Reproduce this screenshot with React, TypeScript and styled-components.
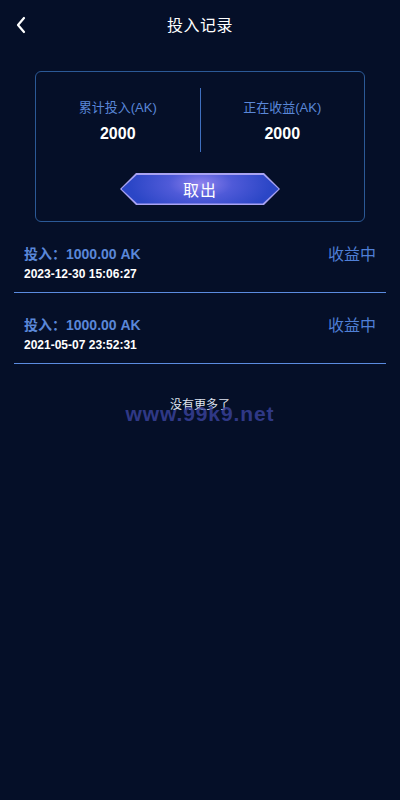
import React from "react";
import styled, { createGlobalStyle } from "styled-components";

const GlobalStyle = createGlobalStyle`
    html, body {
        margin: 0;
        padding: 0;
        background: #050f28;
        font-family: "Liberation Sans", Arial, "Noto Sans CJK SC", sans-serif;
    }
    * { box-sizing: border-box; }
`;

const Page = styled.div`
    width: 400px;
    min-height: 800px;
    background: #050f28;
    color: #fff;
`;

const Header = styled.div`
    height: 50px;
    display: flex;
    align-items: center;
    justify-content: center;
    position: relative;
`;

const Back = styled.div`
    position: absolute;
    left: 13px;
    top: 15px;
    width: 16px;
    height: 20px;
    display: flex;
    align-items: center;
    justify-content: center;
`;

const Title = styled.div`
    font-size: 16px;
    color: #fff;
    letter-spacing: 0.5px;
    margin-top: -2px;
`;

const Card = styled.div`
    margin: 21px 35px 0;
    height: 151px;
    border: 1px solid #2b5996;
    border-radius: 6px;
    padding: 16px 0 0;
    display: flex;
    flex-direction: column;
    align-items: center;
`;

const Stats = styled.div`
    width: 100%;
    display: flex;
`;

const Stat = styled.div`
    flex: 1;
    display: flex;
    flex-direction: column;
    align-items: center;
    padding-top: 12px;
    height: 64px;
`;

const Divider = styled.div`
    width: 1px;
    height: 64px;
    background: #3f6fbf;
`;

const Label = styled.div`
    font-size: 13px;
    color: #5a87d8;
    line-height: 16px;
`;

const Value = styled.div`
    margin-top: 9px;
    font-size: 16px;
    font-weight: bold;
    color: #fff;
    line-height: 18px;
`;

const BtnOuter = styled.div`
    margin-top: 21px;
    width: 160px;
    height: 32px;
    padding: 1.5px;
    background: #a9a3f2;
    clip-path: polygon(10% 0, 90% 0, 100% 50%, 90% 100%, 10% 100%, 0 50%);
`;

const BtnInner = styled.div`
    width: 100%;
    height: 100%;
    clip-path: polygon(10% 0, 90% 0, 100% 50%, 90% 100%, 10% 100%, 0 50%);
    background: radial-gradient(ellipse 45% 110% at 50% 30%, #8e82ee 0%, #4f5ad8 45%, #2b46c6 100%);
    display: flex;
    align-items: center;
    justify-content: center;
    font-size: 16px;
    color: #fff;
    letter-spacing: 1px;
`;

const List = styled.div`
    margin-top: 20px;
    padding: 0 14px;
`;

const Row = styled.div`
    border-bottom: 1px solid #5b8be0;
    padding: 3px 10px 10px;
    margin-bottom: 20px;
    display: flex;
    justify-content: space-between;
    align-items: flex-start;
`;

const RowLeft = styled.div`
    display: flex;
    flex-direction: column;
`;

const Amount = styled.div`
    font-size: 14px;
    font-weight: bold;
    color: #5a87d8;
    line-height: 18px;
`;

const Time = styled.div`
    margin-top: 4px;
    font-size: 12px;
    font-weight: bold;
    color: #fff;
    line-height: 15px;
`;

const Status = styled.div`
    font-size: 16px;
    color: #4f7fd6;
    line-height: 18px;
    margin-top: 1px;
`;

const Footer = styled.div`
    position: relative;
    margin-top: 31px;
    text-align: center;
    font-size: 12px;
    color: #dfe3ee;
    height: 40px;
`;

const Watermark = styled.div`
    position: absolute;
    left: 0;
    right: 0;
    top: 7px;
    text-align: center;
    font-size: 21px;
    font-weight: bold;
    letter-spacing: 0.9px;
    color: rgba(60, 68, 160, 0.8);
    pointer-events: none;
`;

const records = [
    { amount: "1000.00", time: "2023-12-30 15:06:27" },
    { amount: "1000.00", time: "2021-05-07 23:52:31" },
];

export default function App() {
    return (
        <Page>
            <GlobalStyle />
            <Header>
                <Back>
                    <svg width="12" height="18" viewBox="0 0 12 18">
                        <path d="M9 2 L3 9 L9 16" fill="none" stroke="#fff" strokeWidth="2.2" strokeLinecap="round" strokeLinejoin="round" />
                    </svg>
                </Back>
                <Title>投入记录</Title>
            </Header>
            <Card>
                <Stats>
                    <Stat>
                        <Label>累计投入(AK)</Label>
                        <Value>2000</Value>
                    </Stat>
                    <Divider />
                    <Stat>
                        <Label>正在收益(AK)</Label>
                        <Value>2000</Value>
                    </Stat>
                </Stats>
                <BtnOuter>
                    <BtnInner>取出</BtnInner>
                </BtnOuter>
            </Card>
            <List>
                {records.map((r, i) => (
                    <Row key={i}>
                        <RowLeft>
                            <Amount>投入：{r.amount} AK</Amount>
                            <Time>{r.time}</Time>
                        </RowLeft>
                        <Status>收益中</Status>
                    </Row>
                ))}
            </List>
            <Footer>
                没有更多了
                <Watermark>www.99k9.net</Watermark>
            </Footer>
        </Page>
    );
}
